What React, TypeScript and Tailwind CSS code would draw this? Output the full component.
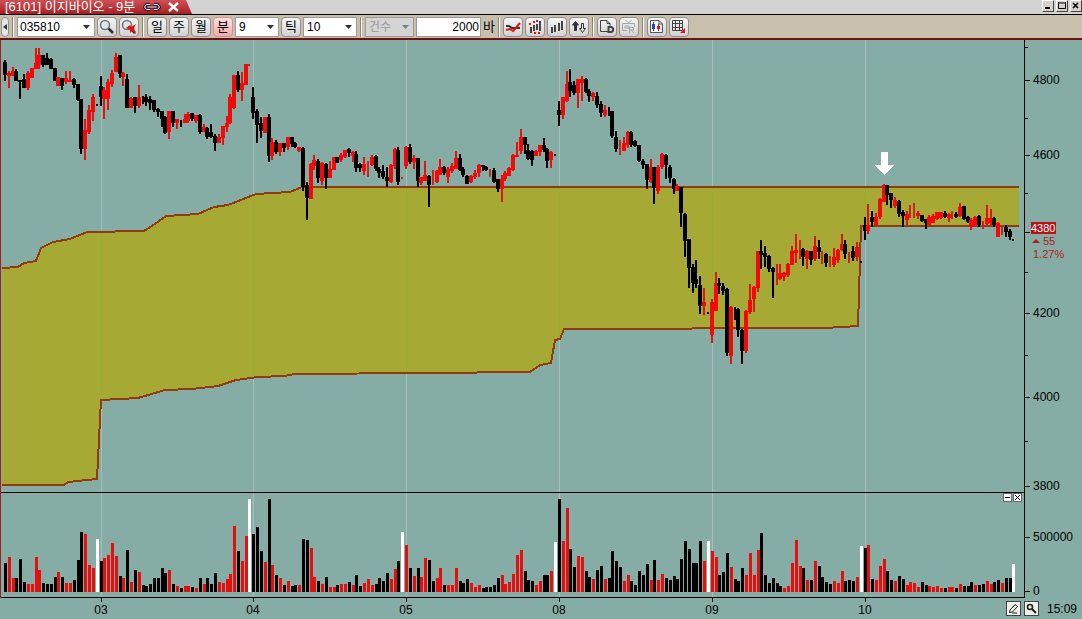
import { useState } from 'react'
import type { ReactNode } from 'react'
import clsx from 'clsx'

const STEP = 3.82
const barX = (i: number) => 5 + Math.round(i * STEP)

// colour, high, body top, body bottom, low - in thirds of a pixel below the block's base
const candleBlocks = [
  {
    base: 40,
    rows: `k60,65,104,122 r94,98,109,143 r80,94,108,108 k87,92,122,122 k120,120,124,176 k103,116,143,143
      r92,98,143,149 r84,84,115,115 r24,70,88,88 r24,45,75,86 k45,45,75,82 k38,54,75,75 k54,58,88,88
      k84,84,122,124 r110,110,137,137 k115,115,137,149 r94,115,127,131 r94,120,124,124 k115,118,136,143
      k132,132,180,182 k178,178,327,341 r238,270,327,359 r196,210,277,283 r163,172,215,243 d191,191,197,197
      k109,138,170,198 r142,150,178,237 r116,127,178,210 r90,98,131,142 r38,52,96,96 k45,45,103,115
      r96,100,112,137 k103,116,203,203 r170,175,203,203 k170,172,197,218 r136,172,197,203 d168,168,192,192
      k163,172,186,197 k168,178,190,210 k180,180,210,215 k204,206,216,230 k214,214,236,262 k228,230,278,281
      r213,213,275,297 k213,213,249,262 r236,238,248,268 d240,240,262,262 r222,236,248,248 r216,222,243,248
      k218,220,238,243 r224,226,243,248 k222,225,277,281 r252,262,275,275 k262,265,292,297 k252,275,290,294
      k281,288,308,333 r281,290,308,308 r258,258,294,314 r228,249,262,277 r163,170,249,253 r105,105,203,206
      k94,105,150,155 r96,130,150,182 r72,72,136,136 e72,72,77,77`,
  },
  {
    base: 60,
    rows: `k82,112,158,176 k148,154,196,248 k172,188,212,234 r172,172,220,220 k163,172,287,305 r234,245,287,299
      k240,245,275,281 r249,249,275,287 k249,250,265,275 r232,232,262,270 k232,232,252,260 k246,248,262,265
      r262,262,273,275 k260,265,380,392 k366,375,414,480 r310,312,418,418 r286,300,318,330 k298,304,355,368
      r306,308,362,374 k310,312,355,386 r302,328,355,355 r290,290,330,330 k290,292,308,308 r280,284,300,305
      r270,270,290,293 k264,268,280,290 r274,275,288,305 k272,282,325,337 k308,312,325,337 r292,312,332,345
      e304,306,345,350 r286,290,315,318 k286,288,328,332 k322,326,338,355 k316,332,352,356 k322,352,364,380
      r312,315,366,368 r264,268,318,328 k260,270,366,374 e350,350,356,356 r258,262,318,326 k253,262,305,311
      r286,295,305,326 k294,295,362,380 r350,352,368,374 r304,346,364,364 k346,348,374,442 e330,334,374,374
      r330,332,366,368 r298,322,346,346 k318,320,338,346 r322,326,350,368 r310,318,334,340 r274,295,326,326
      k282,294,330,334 k322,326,346,350 k346,348,373,373 r346,348,366,370 r330,340,352,356 r312,314,338,350
      k314,316,322,332 k318,320,330,332 e326,328,340,350 k324,330,366,370 k356,358,386,396 r344,356,386,425
      r334,340,356,362 r320,325,348,348 r282,284,330,332 r246,284,292,292 r207,232,272,282 k232,232,254,282
      k252,270,298,300 k270,272,300,318 r270,272,288,288 r254,256,275,288 k234,256,270,275 k264,268,304,323
      r274,276,300,323 d282,282,288,288 k122,150,164,197 r110,112,164,177 r34,72,122,125 k27,66,94,110
      k62,76,100,104 r56,58,100,143 r48,56,68,124 k54,56,96,98 k86,94,108,126 r96,98,112,122 k96,108,136,143
      k122,132,158,170 r136,150,164,170 d142,142,167,167 k154,154,228,234 k214,230,266,276 e240,240,286,286
      r230,250,272,272 r213,216,254,265 k213,216,254,262 k240,244,258,262 k254,256,302,306 k298,302,316,326
      k312,312,360,386 r298,322,366,368 k320,322,385,431 r316,320,392,402 r279,282,320,326 k282,284,316,356
      k316,320,354,368 k354,358,386,402 r372,378,394,394 k382,382,460,500`,
  },
  {
    base: 180,
    rows: `k100,102,182,230 k178,178,265,325 k253,262,308,338 k240,298,312,325 k288,316,377,402 r323,366,377,406
      d396,396,402,402 r358,366,464,488 r276,310,394,394 k294,310,318,342 k310,318,332,345 k325,328,520,527
      r378,380,527,551 d380,380,420,420 k384,386,450,470 k447,450,512,551 r390,392,512,520 r312,360,396,402
      r318,320,358,396 r213,213,325,337 k180,213,224,266 k197,220,232,262 k225,228,268,276 k262,264,277,353
      e253,253,314,314 r252,280,296,300 r276,280,290,302 r250,252,285,290 r198,213,254,254 r162,210,220,248
      e180,180,236,236 k204,206,230,258 r210,214,236,266 k212,214,240,254 r168,198,236,242 k180,200,216,236
      e213,216,236,252 k220,222,248,260 e228,228,260,260 r204,232,254,260 r206,210,240,248 r162,192,210,212
      k180,192,222,236 e216,218,234,248 k198,214,234,242 r186,200,230,242 d243,243,248,248`,
  },
  {
    base: 140,
    rows: `k232,254,274,300 r192,254,274,283 k213,230,246,262 r218,230,254,256 r174,176,232,236 r132,134,186,186
      k135,136,166,196 k160,160,180,204 r170,180,198,204 k180,182,222,232 k210,216,228,260 r213,222,240,256
      e195,213,230,234 e190,190,234,234 r213,220,228,236 k224,226,244,246 k236,238,250,266 r224,230,254,256
      r222,228,250,250 r216,216,238,240 r216,216,234,238 k213,220,232,234 r220,222,234,246 e213,214,230,236
      k216,222,230,234 r190,200,228,230 k198,198,236,240 k228,230,246,250 r234,240,260,270 r228,230,256,260
      k225,228,256,260 e243,246,262,266 r196,234,252,260 r206,234,250,256 k232,234,256,260 r246,248,290,290
      e260,262,285,285 k256,262,276,290 k268,272,290,300 d298,298,302,302`,
  },
]

const candles = candleBlocks.flatMap(({ base, rows }) =>
  rows.trim().split(/\s+/).map((row) => {
    const [high, top, bottom, low] = row.slice(1).split(',').map((v) => Math.round(base + Number(v) / 3))
    return { kind: row[0], high, top, bottom, low }
  }),
)

const volumes = `k29 r35 r14 k14 k33 k10 r8 r8 r35 r22 k9 k8 k8 k15 r20 k15 r9 r9 k12 k32 k60 r58 r27 r24 w53
  k31 r34 r37 r49 r36 k16 r14 k42 r10 k22 r20 k7 k6 k8 k14 k14 k24 k19 r22 k8 r6 k4 r6 r6 k5 r4 k14 r8 k14 k8
  k19 r10 r9 r13 r18 r66 k41 r31 r56 w93 k58 k65 k41 r30 k93 r27 k17 r14 k7 r11 k6 k7 r7 k53 k52 r44 r15 k11
  r8 k15 r5 r5 k7 r8 r8 k10 r7 k17 k6 r9 r13 r7 k8 k14 k11 k19 r13 r23 k31 w60 r47 k24 r16 k24 r15 r34 k32
  k11 r14 r24 k7 r7 r7 r24 k11 k9 k13 r9 r5 r7 k4 k5 k5 k7 k14 r17 r8 r10 r18 r37 r42 k21 k12 k11 r7 r11 k17
  k17 r21 w50 k93 r51 r84 k43 k25 r36 r35 k21 k15 r13 k22 k26 r13 k14 k41 k31 k25 r11 r17 k11 k7 k21 k17 k28
  r12 k32 r12 r18 k14 k12 k16 k13 k33 k51 k43 k29 k29 k51 r31 w51 r41 r35 k17 k20 k39 r25 k13 k11 k24 r17
  r39 r17 r42 k59 k17 k9 k14 k9 k6 r4 r6 r29 r52 r26 k24 r12 k12 r31 k26 k15 k10 k8 r11 r9 r21 k11 k12 k11
  r15 w46 k44 r47 k13 r12 r26 r33 k21 k12 r11 k16 k13 r7 r10 r9 r5 k10 k7 r6 r5 r6 r4 k4 r5 r5 k4 r8 k6 k6
  k10 r7 k7 k8 r11 r8 k10 k12 r9 k14 k14 w28`
  .split(/\s+/)
  .map((v) => ({ kind: v[0], height: Number(v.slice(1)) }))

const days = [
  { label: '03', x: 101 },
  { label: '04', x: 253 },
  { label: '05', x: 406 },
  { label: '08', x: 559 },
  { label: '09', x: 712 },
  { label: '10', x: 865 },
]

const priceTicks = [
  { y: 47 },
  { y: 80, label: '4800' },
  { y: 118 },
  { y: 155, label: '4600' },
  { y: 193 },
  { y: 232, label: '4400', hidden: true },
  { y: 272 },
  { y: 313, label: '4200' },
  { y: 355 },
  { y: 397, label: '4000' },
  { y: 441 },
  { y: 486, label: '3800' },
]

const upperBand =
  '2,268 18,267 24,263 36,261 41,248 53,242 70,239 87,232 144,231 152,226 166,216 198,214 214,207 228,205 256,194 290,192 302,187 1019,187'
const lowerBand =
  '2,485 64,485 68,482 97,479 101,400 138,398 165,390 192,389 218,386 236,380 258,377 285,376 294,374 425,373 530,372 540,365 551,363 555,340 560,339 564,329 825,328 858,326 861,226 1019,226'
const band = `${upperBand} ${lowerBand.split(' ').reverse().join(' ')}`

const barColors: Record<string, string> = { k: '#000', d: '#000', r: '#f60808', e: '#c42a1c', w: '#fff' }

function ToolButton({ label, children, active, disabled, onClick }: {
  label: string
  children: ReactNode
  active?: boolean
  disabled?: boolean
  onClick?: () => void
}) {
  return (
    <button
      aria-label={label}
      disabled={disabled}
      onClick={onClick}
      className={clsx(
        'flex h-5 w-5 shrink-0 items-center justify-center rounded-sm border text-[13px] leading-none',
        active
          ? 'border-[#d89090] bg-linear-to-b from-[#ffe4e2] to-[#f2aaaa]'
          : 'border-[#8f8f8f] bg-linear-to-b from-[#f6f6f6] to-[#d2d2d2]',
      )}
    >
      {children}
    </button>
  )
}

function Separator() {
  return <div className="mx-px h-5 w-0.5 shrink-0 border-l border-[#8c8474] bg-white" />
}

function Caret({ color = '#333' }: { color?: string }) {
  return (
    <svg width="7" height="4" viewBox="0 0 7 4" fill={color}>
      <path d="M0 0H7L3.5 4Z" />
    </svg>
  )
}

function Dropdown({ label, value, options, className, disabled }: {
  label: string
  value: string
  options: string[]
  className: string
  disabled?: boolean
}) {
  return (
    <div className={clsx('relative h-5 shrink-0', className)}>
      <select
        aria-label={label}
        defaultValue={value}
        disabled={disabled}
        className={clsx(
          'block h-full w-full appearance-none border border-[#9a9a9a] pl-[3px] text-xs outline-none',
          disabled ? 'bg-[#d4d4d4] text-[#999]' : 'bg-white text-black',
        )}
      >
        {options.map((option) => (
          <option key={option}>{option}</option>
        ))}
      </select>
      <div className="pointer-events-none absolute inset-y-0 right-[5px] flex items-center">
        <Caret color={disabled ? '#77808c' : '#333'} />
      </div>
    </div>
  )
}

function TitleBar() {
  return (
    <header className="flex h-[14px] items-start justify-between bg-[#d3d3d3]">
      <div className="relative isolate flex h-[14px] w-[192px] items-center pl-[5px] text-white">
        <div className="absolute inset-0 -z-10 bg-linear-to-b from-[#cf5055] to-[#a81c22] [clip-path:polygon(0_0,186px_0,192px_100%,0_100%)]" />
        <h1 className="w-[138px] text-[13px] leading-[14px] whitespace-nowrap">[6101] 이지바이오 - 9분</h1>
        <button aria-label="화면 연결">
          <svg width="18" height="10" viewBox="0 0 18 10" fill="none">
            <path d="M7 2.5H3.5L1.5 5L3.5 7.5H7M11 2.5H14.5L16.5 5L14.5 7.5H11M5 5H13" stroke="#2a1a30" strokeWidth="3" />
            <path d="M7 2.5H3.5L1.5 5L3.5 7.5H7M11 2.5H14.5L16.5 5L14.5 7.5H11M5 5H13" stroke="#fff" />
          </svg>
        </button>
        <button aria-label="닫기" className="ml-[7px]">
          <svg width="11" height="10" viewBox="0 0 11 10" stroke="#fff" strokeWidth="2.4">
            <path d="M1 1L10 9M10 1L1 9" />
          </svg>
        </button>
      </div>
      <div className="flex gap-[2px]">
        <WindowButton label="최소화"><path d="M2 7H7" strokeWidth="2" /></WindowButton>
        <WindowButton label="최대화"><path d="M1.500 1V7.500H8.500V1M1 2H9" /></WindowButton>
        <WindowButton label="창 닫기"><path d="M2 2L7 7M7 2L2 7" strokeWidth="1.600" /></WindowButton>
      </div>
    </header>
  )
}

function WindowButton({ label, children }: { label: string; children: ReactNode }) {
  return (
    <button
      aria-label={label}
      className="flex h-3 w-3 items-center justify-center border border-t-white border-r-[#444] border-b-[#444] border-l-white bg-[#d6d2c8]"
    >
      <svg width="10" height="10" viewBox="0 0 10 10" fill="none" stroke="#000">{children}</svg>
    </button>
  )
}

function Toolbar() {
  const [period, setPeriod] = useState('분')

  return (
    <div className="flex h-6 items-center gap-[2px] overflow-hidden border-t border-black bg-[#c8bfac] pl-px">
      <button aria-label="접기" className="flex h-5 w-2 shrink-0 items-center justify-center rounded-sm border border-[#8f8f8f] bg-[#e6e6e6]">
        <svg width="4" height="6" viewBox="0 0 4 6" fill="#333"><path d="M4 0V6L0 3Z" /></svg>
      </button>
      <Separator />
      <div className="flex h-5 w-[78px] shrink-0 items-center border border-[#9a9a9a] bg-white">
        <input aria-label="종목코드" defaultValue="035810" className="h-full w-[61px] pl-[2px] text-xs outline-none" />
        <button aria-label="종목 목록" className="flex h-full flex-1 items-center justify-center"><Caret /></button>
      </div>
      <ToolButton label="종목 찾기"><Lens /></ToolButton>
      <ToolButton label="찾기 취소"><Lens crossed /></ToolButton>
      <Separator />
      {['일', '주', '월', '분'].map((name) => (
        <ToolButton key={name} label={name} active={period === name} onClick={() => setPeriod(name)}>
          {name}
        </ToolButton>
      ))}
      <Dropdown label="분 단위" value="9" options={['1', '3', '5', '9', '30']} className="w-[44px]" />
      <ToolButton label="틱">틱</ToolButton>
      <Dropdown label="틱 단위" value="10" options={['1', '5', '10']} className="w-[54px]" />
      <Separator />
      <Dropdown label="조회 기준" value="건수" options={['건수']} className="w-[49px]" disabled />
      <label className="flex shrink-0 items-center gap-[2px] text-[13px]">
        <input aria-label="바 개수" defaultValue="2000" className="h-5 w-[65px] border border-[#9a9a9a] bg-white pr-px text-right text-xs outline-none" />
        바
      </label>
      <Separator />
      <ToolButton label="추세선">
        <svg width="16" height="14" viewBox="0 0 16 14" fill="none" strokeWidth="2">
          <path d="M1 6H4L7 8H15" stroke="#333" />
          <path d="M1 10L5 9L8 11L10 9L15 3" stroke="#e01818" />
        </svg>
      </ToolButton>
      <ToolButton label="신호 표시">
        <svg width="14" height="14" viewBox="0 0 14 14" className="shrink-0">
          <path d="M2 7H4V13H2ZM5 5H7V11H5ZM8 4H10V10H8ZM11 1H13V11H11Z" fill="#444" />
          <path d="M1 3H3V5H1ZM5 1H7V3H5ZM8 0H10V2H8ZM6 12H8V14H6ZM10 12H12V14H10Z" fill="#e01818" />
        </svg>
      </ToolButton>
      <ToolButton label="거래량">
        <svg width="14" height="14" viewBox="0 0 14 14" fill="#444">
          <path d="M1 7H3V13H1ZM4 5H6V12H4ZM8 3H10V11H8ZM11 1H13V10H11Z" />
        </svg>
      </ToolButton>
      <ToolButton label="상하 반전">
        <svg width="16" height="14" viewBox="0 0 16 14" fill="none" stroke="#333">
          <path d="M4.500 1.500L7.500 5H5.500V10.500H3.500V5H1.500Z" fill="#333" />
          <path d="M10.500 3.500H12.500V8.500H14.500L11.500 12.500L8.500 8.500H10.500Z" fill="#eee" />
        </svg>
      </ToolButton>
      <Separator />
      <ToolButton label="문서 저장">
        <svg width="16" height="15" viewBox="0 0 16 15" fill="none" stroke="#444" className="shrink-0">
          <path d="M9 12.500H1.500V1.500H8L11 4.500V7M8 1.500V4.500H11" />
          <path d="M9.500 8H11.500C15 8 15 13 11.500 13H9.500Z" strokeWidth="2" />
        </svg>
      </ToolButton>
      <ToolButton label="방송" disabled>
        <svg width="15" height="14" viewBox="0 0 15 14" fill="none" stroke="#a8a8a8">
          <path d="M4.500 0L7.500 3L10.500 0M13.500 7V3.500H1.500V10.500H6M4 6H8V8H4ZM8.500 13V7.500H12.500V10H9M10.500 10L13 13" />
        </svg>
      </ToolButton>
      <Separator />
      <ToolButton label="차트 저장">
        <svg width="15" height="15" viewBox="0 0 15 15" fill="none">
          <path d="M1.500 1.500H10L13.500 5V13.500H1.500Z" stroke="#555" fill="#f6f6f6" />
          <path d="M10 1.500V5H13.500" stroke="#555" />
          <path d="M3 5H6V10H3ZM4 3H5V12H4Z" fill="#2044c8" />
          <path d="M8 7H11V10H8ZM9 5H10V12H9Z" fill="#e01818" />
        </svg>
      </ToolButton>
      <ToolButton label="표 보기">
        <svg width="15" height="15" viewBox="0 0 15 15" fill="none">
          <path d="M1.500 1.500H11.500V11.500H1.500ZM4.500 1V12M8.500 1V12M1 4.500H12M1 8.500H12" stroke="#444" />
          <path d="M14 9V14H9Z" fill="#e01818" />
        </svg>
      </ToolButton>
    </div>
  )
}

function Lens({ crossed }: { crossed?: boolean }) {
  return (
    <svg width="16" height="16" viewBox="0 0 16 16" fill="none" className="shrink-0">
      <circle cx="6" cy="6" r="4.500" stroke="#777" strokeWidth="1.600" fill="#dfe5e7" />
      <path d="M9.500 9.500L14 14" stroke="#333" strokeWidth="2.600" />
      {crossed && <path d="M5 9L9 6L10 8L15 5L13 9L15 15L11 12L9 14V11Z" fill="#e01010" />}
    </svg>
  )
}

function PricePanel() {
  return (
    <svg className="block h-full w-full" viewBox="1 40 1023 452" preserveAspectRatio="none" shapeRendering="crispEdges">
      <clipPath id="band"><polygon points={band} /></clipPath>
      {days.map((day) => (
        <rect key={day.label} x={day.x} y="40" width="1" height="452" fill="#a5c0b9" />
      ))}
      <polygon points={band} fill="#a6a934" />
      <g clipPath="url(#band)">
        {days.map((day) => (
          <rect key={day.label} x={day.x} y="40" width="1" height="452" fill="#92b02c" />
        ))}
      </g>
      <polyline points={upperBand} fill="none" stroke="#933a0e" strokeWidth="2" />
      <polyline points={lowerBand} fill="none" stroke="#933a0e" strokeWidth="2" />
      {candles.map((c, i) => {
        const thin = c.kind === 'd' || c.kind === 'e'
        return (
          <g key={i} fill={barColors[c.kind]}>
            <rect x={barX(i) - 1} y={c.high} width="2" height={Math.max(c.low - c.high, 2)} fill={c.kind === 'r' ? '#e01410' : undefined} />
            {!thin && <rect x={barX(i) - 2} y={c.top} width="4" height={Math.max(c.bottom - c.top, 2)} />}
          </g>
        )
      })}
      <path d="M881 152H888V165H894L884.500 175L875 165H881Z" fill="#fff" />
    </svg>
  )
}

function PriceAxis() {
  return (
    <svg className="block h-full w-full overflow-visible text-xs" viewBox="1024 40 58 452" preserveAspectRatio="none">
      <rect x="1024" y="40" width="1" height="452" />
      {priceTicks.map((tick) => (
        <g key={tick.y}>
          <rect x="1025" y={tick.y} width={tick.label ? 5 : 3} height="1" />
          {tick.label && !tick.hidden && <text x="1033" y={tick.y + 4}>{tick.label}</text>}
        </g>
      ))}
      <rect x="1031" y="222" width="25" height="12" fill="#b81218" />
      <g className="text-[11px]" fill="#b01c1c">
        <text x="1031" y="232" fill="#fff">4380</text>
        <path d="M1032 243H1040L1036 239Z" />
        <text x="1043" y="245">55</text>
        <text x="1033" y="258">1.27%</text>
      </g>
    </svg>
  )
}

function VolumePanel() {
  return (
    <div className="relative h-full">
      <svg className="block h-full w-full" viewBox="1 492 1023 106" preserveAspectRatio="none" shapeRendering="crispEdges">
        <rect x="0" y="492" width="1024" height="1" />
        {days.map((day) => (
          <rect key={day.label} x={day.x} y="493" width="1" height="104" fill="#a5c0b9" />
        ))}
        {volumes.map((v, i) => (
          <rect key={i} x={barX(i) - 1} y={592 - v.height} width="3" height={v.height} fill={v.kind === 'r' ? '#e41010' : barColors[v.kind]} />
        ))}
        <rect x="0" y="597" width="1024" height="1" />
      </svg>
      <div className="absolute top-px right-[2px] flex gap-px">
        <PaneButton label="지표 최소화"><path d="M1 3.500H6" /></PaneButton>
        <PaneButton label="지표 닫기"><path d="M1 1L6 6M6 1L1 6" /></PaneButton>
      </div>
    </div>
  )
}

function PaneButton({ label, children }: { label: string; children: ReactNode }) {
  return (
    <button aria-label={label} className="flex h-[9px] w-[9px] items-center justify-center border border-[#666] bg-white">
      <svg width="7" height="7" viewBox="0 0 7 7" stroke="#000">{children}</svg>
    </button>
  )
}

function VolumeAxis() {
  return (
    <svg className="block h-full w-full text-xs" viewBox="1024 492 58 106" preserveAspectRatio="none">
      <rect x="1024" y="492" width="1" height="106" />
      <rect x="1025" y="537" width="5" height="1" />
      <rect x="1025" y="591" width="5" height="1" />
      <text x="1033" y="541">500000</text>
      <text x="1033" y="595">0</text>
    </svg>
  )
}

function TimeAxis() {
  return (
    <footer className="flex h-[21px] items-center text-xs">
      <svg className="block h-full min-w-0 flex-1" viewBox="0 598 1006 21" preserveAspectRatio="none">
        {days.map((day) => (
          <g key={day.label}>
            <rect x={day.x} y="598" width="1" height="4" />
            <text x={day.x} y="614" textAnchor="middle">{day.label}</text>
          </g>
        ))}
      </svg>
      <button aria-label="그리기" className="mr-[3px] flex h-[15px] w-[15px] items-center justify-center border border-[#444] bg-[#f2f0ea]">
        <svg width="11" height="11" viewBox="0 0 11 11" fill="none" stroke="#222">
          <path d="M2 7L7 1.500L9.500 3.500L4.500 9L1.500 9.500ZM4 10H9" />
        </svg>
      </button>
      <button aria-label="확대" className="flex h-[15px] w-[15px] items-center justify-center border border-[#444] bg-[#f2f0ea]">
        <svg width="11" height="11" viewBox="0 0 11 11" fill="none" stroke="#222">
          <circle cx="4" cy="4" r="2.500" strokeWidth="1.600" />
          <path d="M6 6L10 10" strokeWidth="2.200" />
        </svg>
      </button>
      <time className="w-[43px] pl-2 whitespace-nowrap">15:09</time>
    </footer>
  )
}

export default function App() {
  return (
    <div className="flex h-screen flex-col bg-[#85ada5] text-black [font-family:'Liberation_Sans','Noto_Sans_CJK_KR',sans-serif]">
      <TitleBar />
      <Toolbar />
      <main className="flex min-h-0 flex-1 flex-col border-t-2 border-[#701010]">
        <div className="grid min-h-0 flex-1 grid-cols-[1fr_58px] grid-rows-[minmax(0,1fr)_106px] border-l border-[#a02020]">
          <PricePanel />
          <PriceAxis />
          <VolumePanel />
          <VolumeAxis />
        </div>
        <TimeAxis />
      </main>
    </div>
  )
}
